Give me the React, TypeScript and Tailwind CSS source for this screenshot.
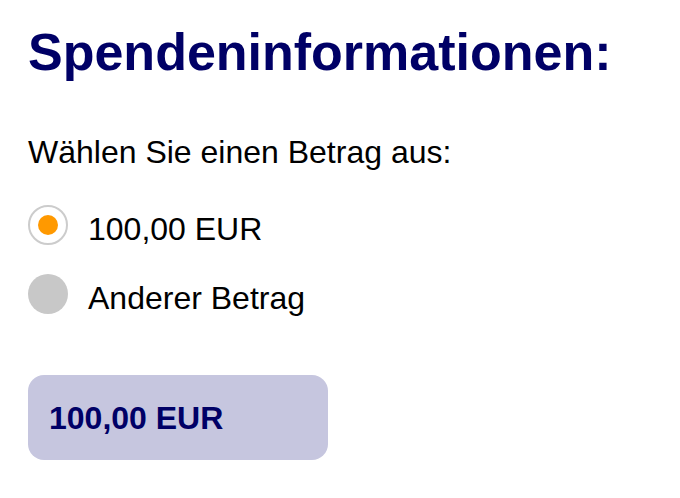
import React from "react";

export default function App() {
  return (
    <div
      className="w-[680px] h-[498px] bg-white pl-[28px] pt-[22px]"
      style={{ fontFamily: '"Liberation Sans", Arial, sans-serif' }}
    >
      <h1 className="text-[52px] leading-[60px] font-bold text-[#000066] m-0">
        Spendeninformationen:
      </h1>
      <p className="mt-[50px] text-[32px] leading-[40px] text-black">
        Wählen Sie einen Betrag aus:
      </p>
      <div className="mt-[33px] flex items-start h-[40px]">
        <div className="w-[40px] h-[40px] rounded-full border-2 border-[#cccccc] bg-white flex items-center justify-center shrink-0">
          <div className="w-[20px] h-[20px] rounded-full bg-[#ff9900]" />
        </div>
        <span className="ml-[20px] mt-[4px] text-[32px] leading-[40px] text-black">
          100,00 EUR
        </span>
      </div>
      <div className="mt-[29px] flex items-start h-[40px]">
        <div className="w-[40px] h-[40px] rounded-full bg-[#c8c8c8] shrink-0" />
        <span className="ml-[20px] mt-[4px] text-[32px] leading-[40px] text-black">
          Anderer Betrag
        </span>
      </div>
      <div className="mt-[61px] w-[300px] h-[85px] rounded-[16px] bg-[#c6c6df] flex items-center pl-[21px]">
        <span className="text-[32px] leading-[40px] font-bold text-[#000066]">
          100,00 EUR
        </span>
      </div>
    </div>
  );
}
